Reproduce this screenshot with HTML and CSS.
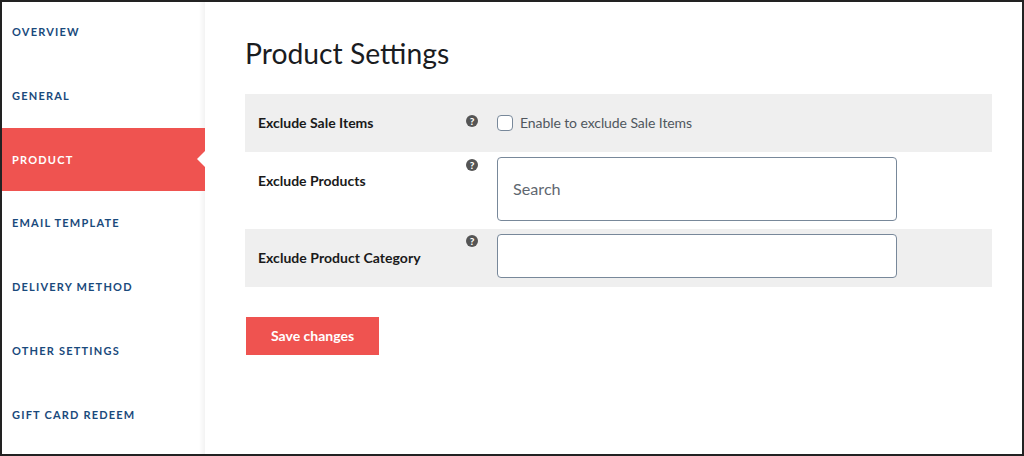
FILE: index.html
```html
<!DOCTYPE html>
<html lang="en">
<head>
<meta charset="utf-8">
<title>Product Settings</title>
<link rel="stylesheet" href="styles.css">
</head>
<body>
<div class="frame">
  <nav class="sidebar">
    <a class="nav-item">OVERVIEW</a>
    <a class="nav-item">GENERAL</a>
    <a class="nav-item active">PRODUCT</a>
    <a class="nav-item">EMAIL TEMPLATE</a>
    <a class="nav-item">DELIVERY METHOD</a>
    <a class="nav-item">OTHER SETTINGS</a>
    <a class="nav-item">GIFT CARD REDEEM</a>
  </nav>
  <main class="content">
    <h1 class="title">Product Settings</h1>
    <div class="table">
      <div class="row shaded row-sale">
        <div class="label">Exclude Sale Items</div>
        <div class="help"><svg viewBox="0 0 12 12" class="help-icon"><circle cx="6" cy="6" r="6" fill="#555"/><text x="6" y="9.5" text-anchor="middle" class="help-mark">?</text></svg></div>
        <label class="field check"><span class="box"></span><span>Enable to exclude Sale Items</span></label>
      </div>
      <div class="row row-products">
        <div class="label">Exclude Products</div>
        <div class="help"><svg viewBox="0 0 12 12" class="help-icon"><circle cx="6" cy="6" r="6" fill="#555"/><text x="6" y="9.5" text-anchor="middle" class="help-mark">?</text></svg></div>
        <div class="field"><div class="input tall">Search</div></div>
      </div>
      <div class="row shaded row-category">
        <div class="label">Exclude Product Category</div>
        <div class="help"><svg viewBox="0 0 12 12" class="help-icon"><circle cx="6" cy="6" r="6" fill="#555"/><text x="6" y="9.5" text-anchor="middle" class="help-mark">?</text></svg></div>
        <div class="field"><div class="input short"></div></div>
      </div>
    </div>
    <button class="save">Save changes</button>
  </main>
</div>
</body>
</html>
```
FILE: styles.css
```css
* { box-sizing: border-box; }
html, body { margin: 0; padding: 0; }
body {
  width: 1024px;
  height: 456px;
  overflow: hidden;
  background: #fff;
  font-family: Lato, "Liberation Sans", sans-serif;
}
.frame {
  position: relative;
  width: 1024px;
  height: 456px;
  display: flex;
  overflow: hidden;
}
.frame::after {
  content: "";
  position: absolute;
  inset: 0;
  border: 2px solid #222;
  pointer-events: none;
}
.sidebar {
  width: 205px;
  flex: none;
  display: flex;
  flex-direction: column;
  box-shadow: inset -5px 0 4px -2px rgba(0, 0, 0, 0.05);
}
.nav-item {
  position: relative;
  height: 63.71px;
  flex: none;
  display: flex;
  align-items: center;
  padding-left: 12px;
  font-size: 11px;
  font-weight: 700;
  letter-spacing: 1.2px;
  color: #1a4a7c;
}
.nav-item.active {
  height: 63.61px;
  margin-top: 0.1px;
  background: #ef5350;
  color: #fff;
}
.nav-item.active::after {
  content: "";
  position: absolute;
  right: 0;
  top: 50%;
  margin-top: -8px;
  border-style: solid;
  border-width: 8px 8px 8px 0;
  border-color: transparent #fff transparent transparent;
}
.content {
  flex: 1;
  padding-left: 40px;
  min-width: 0;
}
.title {
  margin: 33px 0 0;
  font-size: 28.3px;
  line-height: 40px;
  font-weight: 400;
  color: #1a1c1f;
}
.table {
  width: 747px;
  margin-top: 21px;
}
.row {
  display: flex;
  align-items: flex-start;
}
.shaded { background: #efefef; }
.row-sale { height: 58px; }
.row-products { height: 77px; }
.row-category { height: 58px; }
.label {
  width: 221px;
  padding: 19px 0 0 13px;
  font-size: 14px;
  font-weight: 700;
  line-height: 20px;
  color: #1a1a1a;
}
.row-category .label { letter-spacing: 0.04px; }
.help {
  width: 31px;
  flex: none;
}
.row-sale .help { padding-top: 21px; }
.row-products .help { padding-top: 7px; }
.row-category .help { padding-top: 6px; }
.help-icon { display: block; width: 12px; height: 12px; }
.help-mark { font-size: 10px; font-weight: 900; fill: #fff; font-family: Lato, sans-serif; }
.field { width: 400px; }
.check {
  display: flex;
  align-items: center;
  gap: 7px;
  padding-top: 19px;
  font-size: 14px;
  letter-spacing: -0.08px;
  line-height: 20px;
  color: #50575e;
}
.box {
  width: 16px;
  height: 16px;
  background: #fff;
  border: 1px solid #78889a;
  border-radius: 4px;
}
.input {
  background: #fff;
  border: 1px solid #78889a;
  border-radius: 4px;
  display: flex;
  align-items: center;
  padding: 0 0 2px 15px;
  font-size: 16.2px;
  color: #5f6770;
}
.tall { height: 64px; margin-top: 5px; }
.short { height: 44px; margin-top: 5px; }
.save {
  display: block;
  width: 133px;
  height: 38px;
  margin: 30px 0 0 1px;
  border: 0;
  padding: 0 0 2px;
  background: #ef5350;
  color: #fff;
  font-family: Lato, sans-serif;
  font-size: 14px;
  font-weight: 700;
}
```
